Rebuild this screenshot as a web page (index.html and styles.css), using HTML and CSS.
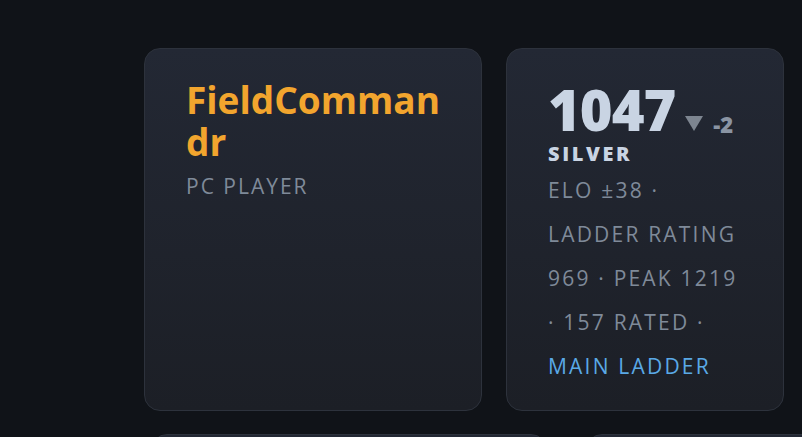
FILE: index.html
```html
<!DOCTYPE html>
<html lang="en">
<head>
    <meta charset="UTF-8">
    <meta name="viewport" content="width=device-width, initial-scale=1.0">
    <title>Player Profile</title>
    <link rel="stylesheet" href="styles.css">
</head>
<body>
    <div class="board">
        <div class="card-row">
            <div class="card card-player">
                <h1 class="player-name">FieldCommandr</h1>
                <div class="player-platform">PC PLAYER</div>
            </div>
            <div class="card card-rating">
                <div class="rating-line">
                    <span class="rating-value">1047</span>
                    <svg class="rating-arrow" width="18" height="15" viewBox="0 0 18 15">
                        <path d="M0 0 H18 L9 15 Z" fill="#7d8590"/>
                    </svg>
                    <span class="rating-delta">-2</span>
                </div>
                <div class="rating-tier">SILVER</div>
                <p class="rating-meta">ELO ±38 · LADDER RATING 969 · PEAK 1219 · 157 RATED · <span class="ladder-name">MAIN LADDER</span></p>
            </div>
        </div>
        <div class="card-row card-row-next">
            <div class="card card-wide"></div>
            <div class="card card-rest"></div>
        </div>
    </div>
</body>
</html>
```

FILE: styles.css
```css
/* Reset & Basic Styling */
* {
    margin: 0;
    padding: 0;
    box-sizing: border-box;
}
body {
    font-family: 'Open Sans', 'Noto Sans', sans-serif;
    background: #101318;
    color: #8b949e;
    overflow: hidden;
    height: 100vh;
}
.board {
    padding: 48px 18px 0 144px;
    display: flex;
    flex-direction: column;
    gap: 23px;
}
.card-row {
    display: flex;
    gap: 24px;
}
.card {
    background: linear-gradient(180deg, #232834 0%, #1c1f26 100%);
    border: 1px solid #2d323c;
    border-radius: 16px;
    height: 363px;
}
.card-player {
    width: 338px;
    padding: 30px 41px;
}
.card-rating {
    width: 278px;
    padding: 38px 41px 30px;
}

/* left card: name + platform */
.player-name {
    font-size: 37px;
    font-weight: 700;
    line-height: 42px;
    color: #f2a52e;
    word-break: break-all;
}
.player-platform {
    margin-top: 9px;
    font-size: 21px;
    letter-spacing: 2px;
    color: #7f8a99;
}

/* right card: rating block */
.rating-line {
    display: flex;
    align-items: flex-end;
    height: 44px;
}
.rating-value {
    font-size: 56px;
    font-weight: 800;
    line-height: 44px;
    color: #c9d4e3;
    letter-spacing: -1px;
}
.rating-arrow {
    margin: 0 0 0 10px;
}
.rating-delta {
    margin: 0 0 -4px 10px;
    font-size: 22px;
    font-weight: 800;
    line-height: 22px;
    color: #8a94a3;
}
.rating-tier {
    margin-top: 12px;
    font-size: 20px;
    font-weight: 800;
    letter-spacing: 2.6px;
    color: #c9d4e3;
    line-height: 22px;
}
.rating-meta {
    margin-top: 3px;
    font-size: 21px;
    line-height: 44px;
    letter-spacing: 2.2px;
    color: #7f8a99;
}
.ladder-name {
    color: #5aa9e6;
}

/* next row, only its top edge shows */
.card-row-next {
    padding-left: 7px;
    gap: 39px;
}
.card-wide {
    width: 396px;
    flex-shrink: 0;
}
.card-rest {
    flex: 1;
    margin-right: -40px;
}
```
